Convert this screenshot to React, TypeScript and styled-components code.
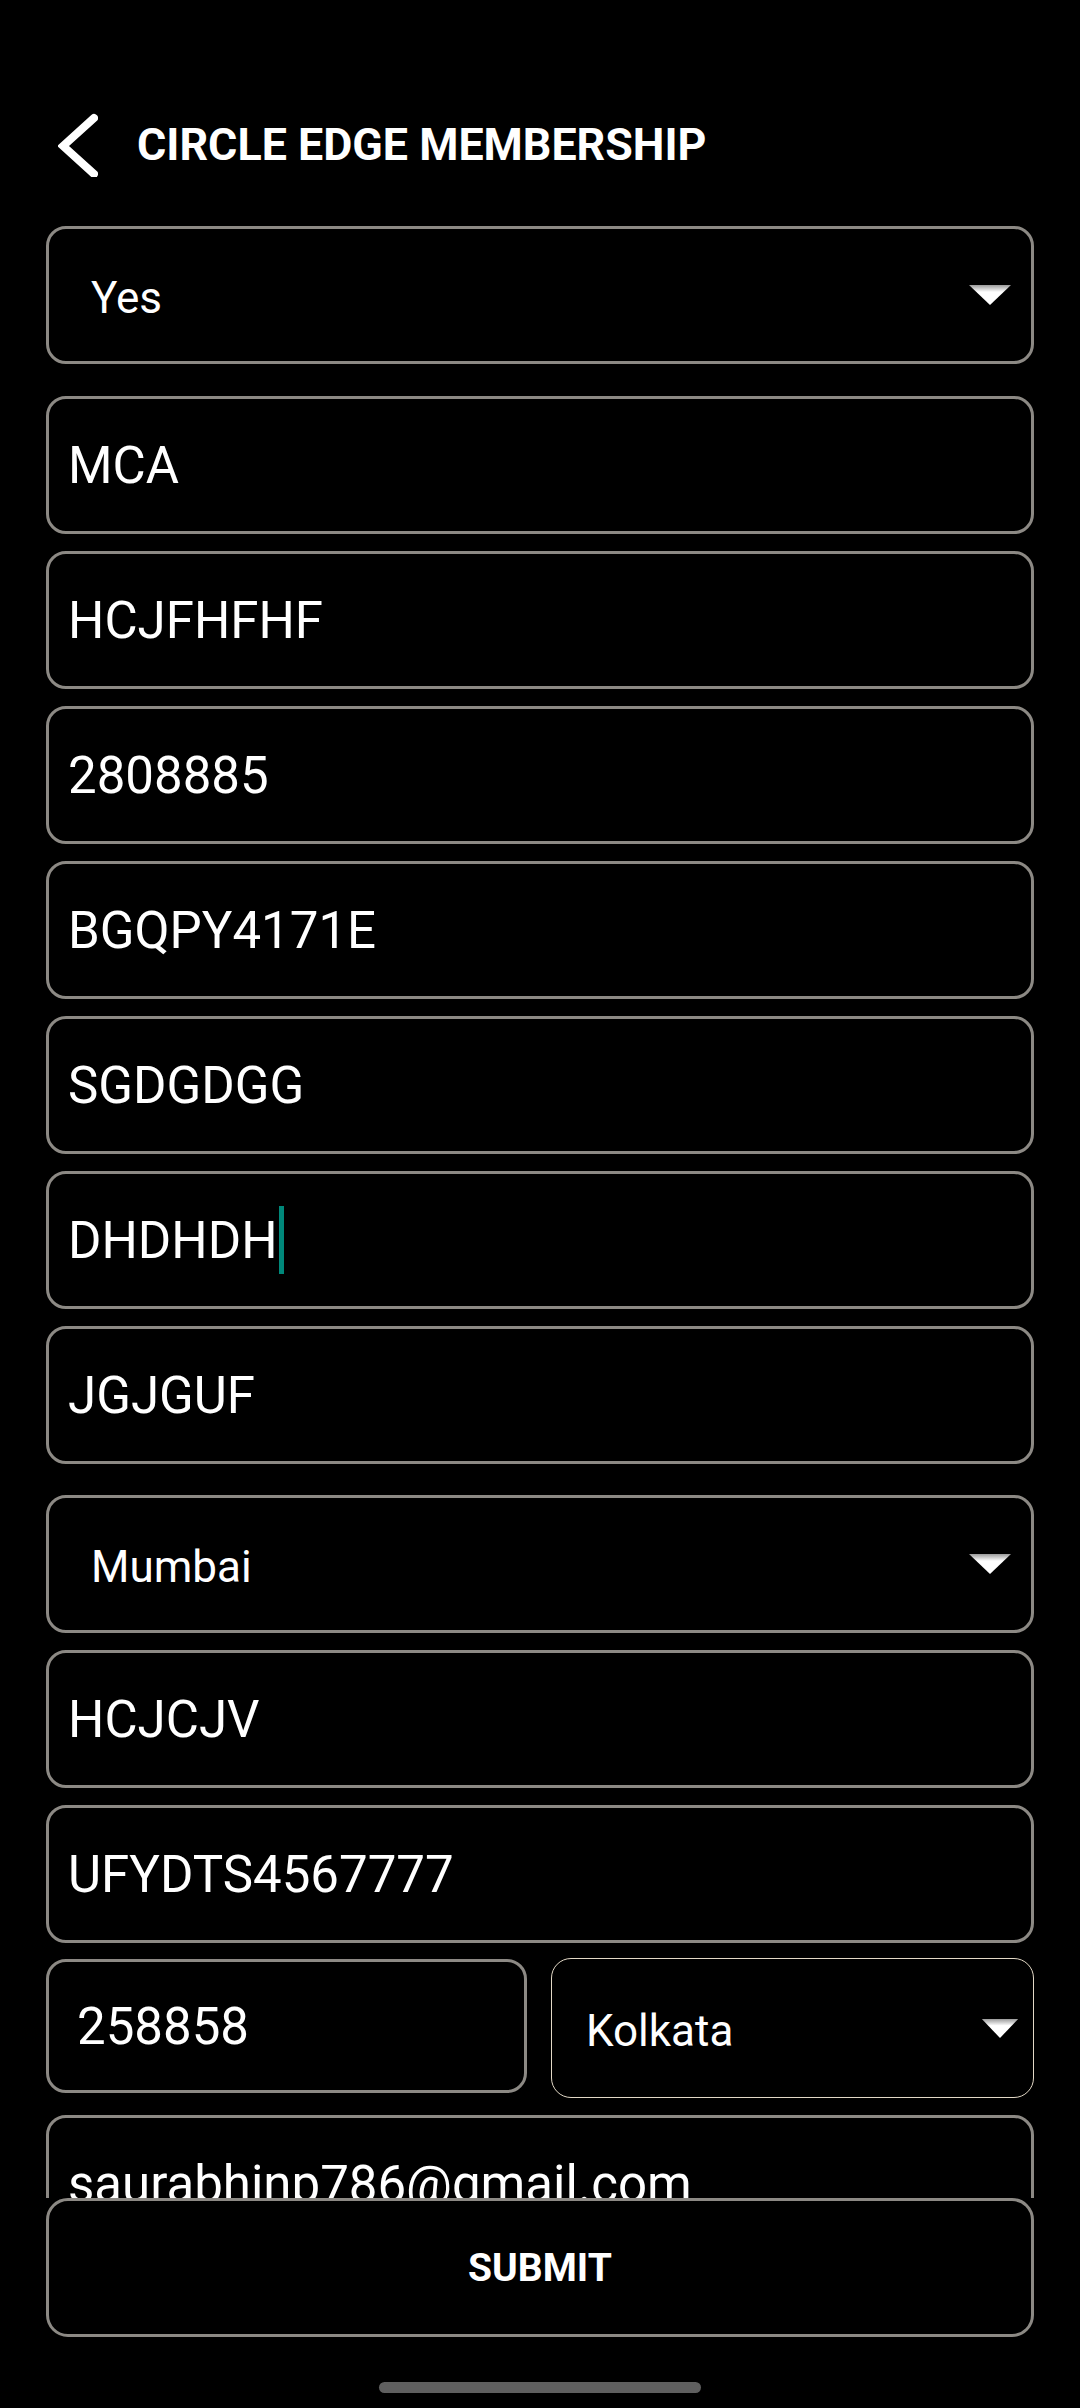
import React from "react";
import styled, { createGlobalStyle } from "styled-components";

const GlobalStyle = createGlobalStyle`
  html, body {
    margin: 0;
    padding: 0;
    background: #000;
  }
  body {
    font-family: Roboto, "Noto Sans", "Liberation Sans", sans-serif;
    color: #fff;
  }
`;

const Screen = styled.div`
  width: 1080px;
  height: 2408px;
  background: #000;
  display: flex;
  flex-direction: column;
  overflow: hidden;
`;

const Header = styled.div`
  display: flex;
  align-items: center;
  gap: 39px;
  height: 70px;
  padding: 110px 0 0 58px;
  flex: none;
`;

const Title = styled.h1`
  margin: 0;
  font-size: 44.8px;
  font-weight: 700;
  color: #fff;
  line-height: 1;
`;

const ScrollArea = styled.div`
  height: 2018px;
  flex: none;
  overflow: hidden;
  display: flex;
  flex-direction: column;
  padding: 46px 46px 0 46px;
  box-sizing: border-box;
`;

const Box = styled.div<{ $top?: number; $height?: number }>`
  flex: none;
  height: ${(p) => p.$height ?? 138}px;
  margin-top: ${(p) => p.$top ?? 0}px;
  border: 3px solid #8c8984;
  border-radius: 20px;
  box-sizing: border-box;
  display: flex;
  align-items: center;
`;

const TextField = styled(Box)<{ $pad?: number }>`
  padding-left: ${(p) => p.$pad ?? 19}px;
  font-size: 51px;
  font-weight: 400;
`;

const Dropdown = styled(Box)<{ $pad?: number; $light?: boolean; $arrowRight?: number }>`
  justify-content: space-between;
  padding-left: ${(p) => p.$pad ?? 42}px;
  padding-right: ${(p) => p.$arrowRight ?? 19}px;
  font-size: 44px;
  font-weight: 400;
  ${(p) => (p.$light ? "border: 1.5px solid #e2d8c6;" : "")}
`;

const DropLabel = styled.span`
  padding-top: 6px;
`;

const Row = styled.div`
  display: flex;
  align-items: flex-start;
  gap: 24px;
  margin-top: 15px;
`;

const Caret = styled.span`
  display: inline-block;
  width: 5px;
  height: 68px;
  margin-left: 1px;
  background: #00887a;
`;

const SubmitButton = styled.button`
  flex: none;
  margin: 0 46px;
  height: 139px;
  border: 3px solid #8c8984;
  border-radius: 22px;
  background: #000;
  color: #fff;
  font-family: Roboto, "Liberation Sans", sans-serif;
  font-size: 39px;
  font-weight: 700;
  box-sizing: border-box;
`;

const NavBar = styled.div`
  flex: 1;
  display: flex;
  justify-content: center;
  padding-top: 45px;
`;

const Handle = styled.div`
  width: 322px;
  height: 11px;
  border-radius: 6px;
  background: #5f5f5f;
`;

function BackIcon() {
  return (
    <svg width="40" height="64" viewBox="0 0 40 64">
      <polyline
        points="36,5 5,33 36,61"
        fill="none"
        stroke="#fff"
        strokeWidth="8"
        strokeLinecap="round"
        strokeLinejoin="miter"
      />
    </svg>
  );
}

function Arrow({ w = 44, h = 22 }: { w?: number; h?: number }) {
  return (
    <svg width={w} height={h} viewBox="0 0 44 22" preserveAspectRatio="none">
      <defs>
        <linearGradient id="arrowShade" x1="0" y1="0" x2="0" y2="1">
          <stop offset="0" stopColor="#9a9a9a" />
          <stop offset="0.35" stopColor="#ffffff" />
          <stop offset="1" stopColor="#ffffff" />
        </linearGradient>
        <filter id="soft">
          <feGaussianBlur stdDeviation="0.7" />
        </filter>
      </defs>
      <polygon points="1,1 43,1 22,21" fill="url(#arrowShade)" filter="url(#soft)" />
    </svg>
  );
}

const fields = ["MCA", "HCJFHFHF", "2808885", "BGQPY4171E", "SGDGDGG"];

export default function App() {
  return (
    <Screen>
      <GlobalStyle />
      <Header>
        <BackIcon />
        <Title>CIRCLE EDGE MEMBERSHIP</Title>
      </Header>

      <ScrollArea>
        <Dropdown>
          <DropLabel>Yes</DropLabel>
          <Arrow />
        </Dropdown>

        {fields.map((f, i) => (
          <TextField key={f} $top={i === 0 ? 32 : 17}>
            {f}
          </TextField>
        ))}

        <TextField $top={17}>
          DHDHDH
          <Caret />
        </TextField>
        <TextField $top={17}>JGJGUF</TextField>

        <Dropdown $top={31}>
          <DropLabel>Mumbai</DropLabel>
          <Arrow />
        </Dropdown>

        <TextField $top={17}>HCJCJV</TextField>
        <TextField $top={17}>UFYDTS4567777</TextField>

        <Row>
          <TextField $top={1} $height={134} $pad={28} style={{ flex: "0 0 481px" }}>
            258858
          </TextField>
          <Dropdown $height={140} $light $pad={34} $arrowRight={14} style={{ flex: 1 }}>
            <DropLabel>Kolkata</DropLabel>
            <Arrow w={38} h={21} />
          </Dropdown>
        </Row>

        <TextField $top={17}>saurabhinp786@gmail.com</TextField>
      </ScrollArea>

      <SubmitButton>SUBMIT</SubmitButton>

      <NavBar>
        <Handle />
      </NavBar>
    </Screen>
  );
}
